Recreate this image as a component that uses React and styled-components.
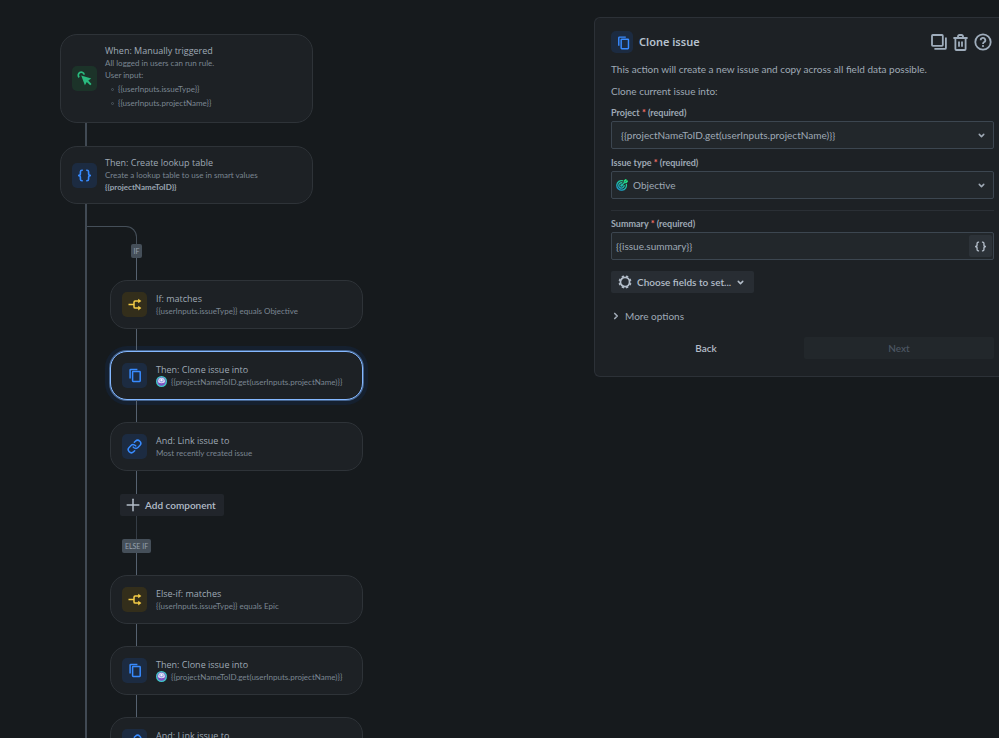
import { Link as LinkIcon, ChevronDown, ChevronRight, Plus } from 'lucide-react'
import styled, { createGlobalStyle, css } from 'styled-components'

const GlobalStyle = createGlobalStyle`
  *,
  *::before,
  *::after {
    box-sizing: border-box;
  }

  body {
    margin: 0;
    background: #161a1d;
    color: #9fa9b5;
    font-family: Lato, 'Open Sans', sans-serif;
    font-size: 10px;
    line-height: 14px;
  }

  button,
  input,
  select {
    margin: 0;
    font: inherit;
    color: inherit;
  }
`

const tones = {
  green: { background: '#1c3329', color: '#2abb7f' },
  blue: { background: '#1c2b41', color: '#388bff' },
  yellow: { background: '#332e1b', color: '#f5cd47' },
}

const Page = styled.div`
  display: grid;
  grid-template-columns: minmax(0, 594fr) minmax(0, 405fr);
  align-items: start;
  height: 100vh;
  overflow: hidden;
`

const Canvas = styled.main`
  height: 100vh;
  padding: 34px 0 0 60px;
  overflow-y: auto;
  scrollbar-width: none;
`

const Card = styled.article`
  display: flex;
  align-items: center;
  gap: 8px;
  max-width: 253px;
  min-height: 49px;
  padding: 10px 11px;
  border: 1px solid #2e3338;
  border-radius: 17px;
  background: #1d2125;

  ${(props) =>
    props.$selected &&
    css`
      border-color: #85b8ff;
      box-shadow:
        0 0 0 1px #45648f,
        0 0 0 5px #15202f;
    `}
`

const Tile = styled.span`
  display: grid;
  flex: none;
  place-items: center;
  width: ${(props) => props.$size || 25}px;
  height: ${(props) => props.$size || 25}px;
  border-radius: 5px;
  background: ${(props) => tones[props.$tone].background};
  color: ${(props) => tones[props.$tone].color};
`

const CardTitle = styled.h3`
  margin: 0;
  font: 400 9px/12px 'Open Sans', sans-serif;
`

const CardText = styled.p`
  display: flex;
  align-items: center;
  gap: 4px;
  margin: 0;
  color: #7b8692;
  font-size: 8px;
  line-height: 12px;
`

const SmartValue = styled.strong`
  color: #98a3af;
  font-weight: 700;
`

const InputList = styled.ul`
  margin: 0;
  padding: 1px 0 2px 6px;
  list-style: none;
  color: #7b8692;
  font-size: 8px;
  line-height: 14px;
`

const InputItem = styled.li`
  display: flex;
  align-items: center;
  gap: 4px;

  &::before {
    content: '';
    width: 3px;
    height: 3px;
    border: 1px solid #4d565f;
    border-radius: 50%;
  }
`

const TrunkLink = styled.div`
  width: 2px;
  height: 23px;
  margin-left: 25px;
  background: #414a54;
`

const Trunk = styled.div`
  margin-left: 25px;
  padding-top: 22px;
  border-left: 2px solid #414a54;
`

const Elbow = styled.div`
  width: 50px;
  height: 18px;
  border-top: 1px solid #454f59;
  border-right: 1px solid #454f59;
  border-top-right-radius: 11px;
`

const Branch = styled.div`
  padding-left: 23px;

  ${Card} {
    gap: 9px;
  }
`

const Rail = styled.div`
  display: flex;
  flex-direction: column;
  align-items: center;
  width: 53px;
`

const Connector = styled.div`
  width: 1px;
  height: ${(props) => props.$height || 22}px;
  background: ${(props) => (props.$dim ? '#353d46' : '#566270')};
`

const Badge = styled.span`
  padding: 0 3px;
  border-radius: 2px;
  background: #454f59;
  color: #96a2af;
  font-size: 7px;
  line-height: 14px;
`

const Button = styled.button`
  display: flex;
  align-items: center;
  justify-content: center;
  height: 22px;
  padding: 0 8px;
  border: 0;
  border-radius: 2px;
  background: ${(props) => props.$background || 'transparent'};
  color: #b3bdc9;
  font-weight: 600;
  line-height: 14px;

  &:disabled {
    color: #4b5561;
  }
`

const AddButton = styled(Button)`
  gap: 2px;
  margin-left: 10px;
  padding: 0 8px 0 3px;
`

const Panel = styled.aside`
  margin-top: 17px;
  padding: 13px 5px 17px 16px;
  border: 1px solid #2c3137;
  border-right: 0;
  border-radius: 6px 0 0 6px;
  background: #1d2125;
`

const PanelHeader = styled.header`
  display: flex;
  align-items: center;
  gap: 6px;
  padding-right: 2px;
`

const PanelTitle = styled.h2`
  flex: 1;
  margin: 0;
  color: #b6c2cf;
  font: 600 11px/14px 'Noto Sans', sans-serif;
`

const Actions = styled.div`
  display: flex;
  align-items: center;
  gap: 6px;
`

const IconButton = styled.button`
  display: grid;
  place-items: center;
  padding: 0;
  border: 0;
  background: none;
  color: #9fadbc;
`

const Text = styled.p`
  margin: ${(props) => props.$top}px 0 0;
`

const Field = styled.div`
  display: flex;
  flex-direction: column;
  gap: 2px;
  margin-top: ${(props) => props.$top}px;
`

const Label = styled.label`
  font-size: 9px;
  font-weight: 700;
  line-height: 12px;
`

const Star = styled.span`
  color: #f87168;
`

/* Control, leading icon and chevron share a single grid cell. */
const SelectBox = styled.div`
  display: grid;
  align-items: center;

  > * {
    grid-area: 1 / 1;
  }

  > svg {
    z-index: 1;
    margin-left: 5px;
    pointer-events: none;
  }

  > svg:last-child {
    justify-self: end;
    margin-right: 8px;
  }
`

const fieldFrame = css`
  width: 100%;
  height: 28px;
  border: 1px solid #3c4650;
  border-radius: 2px;
  background: #22272b;
`

const Select = styled.select`
  ${fieldFrame}
  appearance: none;
  padding: 0 24px 0 ${(props) => (props.$icon ? 21 : 9)}px;
`

const InputBox = styled.div`
  ${fieldFrame}
  display: flex;
  align-items: center;
  padding-right: 1px;
`

const Input = styled.input`
  flex: 1;
  min-width: 0;
  padding: 0 4px;
  border: 0;
  outline: 0;
  background: none;
`

const InsertButton = styled(Button)`
  width: 23px;
  padding: 0;
`

const Divider = styled.hr`
  height: 1px;
  margin: 11px 0 0;
  border: 0;
  background: #2a2f35;
`

const FieldsButton = styled(Button)`
  gap: 5px;
  margin-top: 11px;
  padding: 0 9px 0 7px;
`

const MoreOptions = styled.button`
  display: flex;
  align-items: center;
  gap: 4px;
  margin-top: 16px;
  padding: 0;
  border: 0;
  background: none;
  line-height: 14px;
`

const Footer = styled.footer`
  display: grid;
  grid-template-columns: 1fr 1fr;
  gap: 3px;
  margin-top: 14px;
`

const CursorIcon = () => (
  <svg width="25" height="25" viewBox="0 0 25 25" fill="none">
    <path d="M7.2 11.4A3 3 0 1 1 12.2 8.6" stroke="currentColor" strokeWidth="1.7" />
    <path
      d="M9.2 9.4 19.2 12.6 16.3 14.5 19.5 17.9 18.2 19.2 14.8 16 12.9 19.2Z"
      fill="currentColor"
    />
  </svg>
)

const BracesIcon = ({ size = 25 }) => (
  <svg width={size} height={size} viewBox="0 0 25 25" fill="none" stroke="currentColor" strokeWidth="1.6">
    <path d="M10.8 7.2H10Q8.4 7.2 8.4 8.8V10.7Q8.4 12.5 6 12.5 8.4 12.5 8.4 14.3V16.2Q8.4 17.8 10 17.8H10.8" />
    <path d="M14.2 7.2H15Q16.6 7.2 16.6 8.8V10.7Q16.6 12.5 19 12.5 16.6 12.5 16.6 14.3V16.2Q16.6 17.8 15 17.8H14.2" />
  </svg>
)

const BranchIcon = () => (
  <svg width="25" height="25" viewBox="0 0 25 25" fill="none" stroke="currentColor" strokeWidth="1.5">
    <path d="M6.5 12.5H12M16.8 9H13.2Q12 9 12 10.2V14.9Q12 16.1 13.2 16.1H16.8" />
    <path d="M16.2 6.7 19.4 9 16.2 11.3ZM16.2 13.8 19.4 16.1 16.2 18.4Z" fill="currentColor" stroke="none" />
  </svg>
)

const CloneIcon = ({ size = 25 }) => (
  <svg width={size} height={size} viewBox="0 0 25 25" fill="none" stroke="currentColor" strokeWidth="1.5">
    <rect x="10.6" y="8.6" width="7.6" height="9.8" rx="0.6" />
    <path d="M15.4 6.4H8.8Q8.1 6.4 8.1 7.1V15.4" />
  </svg>
)

const ProjectAvatar = () => (
  <svg width="11" height="11" viewBox="0 0 22 22">
    <circle cx="11" cy="11" r="11" fill="#3fc8c9" />
    <circle cx="11" cy="11" r="8.4" fill="#7f4fc0" />
    <path d="M4.2 11A6.8 7.6 0 0 1 17.8 11Q17.8 14.4 11 14.4T4.2 11Z" fill="#dfe0f6" />
    <circle cx="11" cy="9" r="4.2" fill="#93a2e2" />
    <circle cx="11" cy="8.4" r="2.3" fill="#f4f5fd" />
  </svg>
)

const ObjectiveIcon = () => (
  <svg width="12" height="12" viewBox="0 0 24 24" fill="none" stroke="url(#objective)" strokeWidth="2.6">
    <defs>
      <linearGradient id="objective" gradientUnits="userSpaceOnUse" x1="20" y1="2" x2="6" y2="22">
        <stop offset="0" stopColor="#22e07a" />
        <stop offset="1" stopColor="#1a9fd0" />
      </linearGradient>
    </defs>
    <path d="M14 3.6A9.6 9.6 0 1 0 20.4 10" />
    <path d="M12.6 7.8A5.4 5.4 0 1 0 16.2 12" />
    <circle cx="11" cy="13" r="1.4" />
    <path d="M11 13 17 7M16.6 7.4V3.6L19.6 1.4V4.4H22.8L20.4 7.4Z" />
  </svg>
)

const DuplicateIcon = () => (
  <svg width="16" height="16" viewBox="0 0 16 16" fill="none" stroke="currentColor" strokeWidth="1.8">
    <rect x="1" y="1" width="10.8" height="10.8" rx="0.8" />
    <path d="M14.9 3.4V13.9Q14.9 14.9 13.9 14.9H3.4" />
  </svg>
)

const TrashIcon = () => (
  <svg width="15" height="17" viewBox="0 0 15 17" fill="none" stroke="currentColor" strokeWidth="1.8">
    <path d="M0.4 4H14.6M5 3.8V2.6Q5 1 6.6 1H8.4Q10 1 10 2.6V3.8" />
    <path d="M2.4 4V15Q2.4 16 3.4 16H11.6Q12.6 16 12.6 15V4M6 7.4V12.8M9 7.4V12.8" />
  </svg>
)

const HelpIcon = () => (
  <svg width="18" height="18" viewBox="0 0 18 18" fill="none" stroke="currentColor" strokeWidth="1.8">
    <circle cx="9" cy="9" r="7.7" />
    <path d="M6.7 7.2A2.3 2.3 0 1 1 10.2 9.1Q9 9.8 9 11" />
    <circle cx="9" cy="13" r="1.1" fill="currentColor" stroke="none" />
  </svg>
)

const GearIcon = () => (
  <svg width="14" height="14" viewBox="0 0 14 14" fill="none" stroke="currentColor">
    <circle cx="7" cy="7" r="4.6" strokeWidth="1.8" />
    <circle cx="7" cy="7" r="5.8" strokeWidth="1.4" pathLength="16" strokeDasharray="1 1" strokeDashoffset="-0.5" />
  </svg>
)

const icons = {
  cursor: { tone: 'green', icon: <CursorIcon /> },
  braces: { tone: 'blue', icon: <BracesIcon /> },
  branch: { tone: 'yellow', icon: <BranchIcon /> },
  clone: { tone: 'blue', icon: <CloneIcon /> },
  link: { tone: 'blue', icon: <LinkIcon size={15} strokeWidth={2.4} /> },
}

const Step = ({ type, title, selected, children }) => (
  <Card $selected={selected}>
    <Tile $tone={icons[type].tone}>{icons[type].icon}</Tile>
    <div>
      <CardTitle>{title}</CardTitle>
      {children}
    </div>
  </Card>
)

const CloneStep = ({ selected }) => (
  <Step type="clone" title="Then: Clone issue into" selected={selected}>
    <CardText>
      <ProjectAvatar />
      {'{{projectNameToID.get(userInputs.projectName)}}'}
    </CardText>
  </Step>
)

const LinkStep = () => (
  <Step type="link" title="And: Link issue to">
    <CardText>Most recently created issue</CardText>
  </Step>
)

const RailLink = (props) => (
  <Rail>
    <Connector {...props} />
  </Rail>
)

const RequiredLabel = ({ htmlFor, children }) => (
  <Label htmlFor={htmlFor}>
    {children} <Star>*</Star> (required)
  </Label>
)

const RuleCanvas = () => (
  <Canvas>
    <Step type="cursor" title="When: Manually triggered">
      <CardText>All logged in users can run rule.</CardText>
      <CardText>User input:</CardText>
      <InputList>
        <InputItem>{'{{userInputs.issueType}}'}</InputItem>
        <InputItem>{'{{userInputs.projectName}}'}</InputItem>
      </InputList>
    </Step>
    <TrunkLink />
    <Step type="braces" title="Then: Create lookup table">
      <CardText>Create a lookup table to use in smart values</CardText>
      <CardText>
        <SmartValue>{'{{projectNameToID}}'}</SmartValue>
      </CardText>
    </Step>
    <Trunk>
      <Elbow />
      <Branch>
        <Rail>
          <Badge>IF</Badge>
          <Connector />
        </Rail>
        <Step type="branch" title="If: matches">
          <CardText>{'{{userInputs.issueType}} equals Objective'}</CardText>
        </Step>
        <RailLink />
        <CloneStep selected />
        <RailLink />
        <LinkStep />
        <RailLink $height={23} />
        <AddButton type="button" $background="#21252b">
          <Plus size={20} strokeWidth={1.8} />
          Add component
        </AddButton>
        <Rail>
          <Connector $height={23} $dim />
          <Badge>ELSE IF</Badge>
          <Connector />
        </Rail>
        <Step type="branch" title="Else-if: matches">
          <CardText>{'{{userInputs.issueType}} equals Epic'}</CardText>
        </Step>
        <RailLink />
        <CloneStep />
        <RailLink />
        <LinkStep />
      </Branch>
    </Trunk>
  </Canvas>
)

const ClonePanel = () => (
  <Panel>
    <PanelHeader>
      <Tile $tone="blue" $size={22}>
        <CloneIcon size={24} />
      </Tile>
      <PanelTitle>Clone issue</PanelTitle>
      <Actions>
        <IconButton type="button" aria-label="Duplicate">
          <DuplicateIcon />
        </IconButton>
        <IconButton type="button" aria-label="Delete">
          <TrashIcon />
        </IconButton>
        <IconButton type="button" aria-label="Help">
          <HelpIcon />
        </IconButton>
      </Actions>
    </PanelHeader>
    <Text $top={9}>
      This action will create a new issue and copy across all field data possible.
    </Text>
    <Text $top={8}>Clone current issue into:</Text>
    <Field $top={9}>
      <RequiredLabel htmlFor="project">Project</RequiredLabel>
      <SelectBox>
        <Select id="project">
          <option>{'{{projectNameToID.get(userInputs.projectName)}}'}</option>
        </Select>
        <ChevronDown size={9} strokeWidth={4} />
      </SelectBox>
    </Field>
    <Field $top={8}>
      <RequiredLabel htmlFor="issue-type">Issue type</RequiredLabel>
      <SelectBox>
        <Select id="issue-type" $icon>
          <option>Objective</option>
        </Select>
        <ObjectiveIcon />
        <ChevronDown size={9} strokeWidth={4} />
      </SelectBox>
    </Field>
    <Divider />
    <Field $top={7}>
      <RequiredLabel htmlFor="summary">Summary</RequiredLabel>
      <InputBox>
        <Input id="summary" type="text" defaultValue="{{issue.summary}}" />
        <InsertButton type="button" aria-label="Insert smart value" $background="#2c3238">
          <BracesIcon size={21} />
        </InsertButton>
      </InputBox>
    </Field>
    <FieldsButton type="button" $background="#282d33">
      <GearIcon />
      Choose fields to set...
      <ChevronDown size={9} strokeWidth={4} />
    </FieldsButton>
    <MoreOptions type="button">
      <ChevronRight size={10} strokeWidth={4} />
      More options
    </MoreOptions>
    <Footer>
      <Button type="button">Back</Button>
      <Button type="button" disabled $background="#22272b">
        Next
      </Button>
    </Footer>
  </Panel>
)

const App = () => (
  <>
    <GlobalStyle />
    <Page>
      <RuleCanvas />
      <ClonePanel />
    </Page>
  </>
)

export default App
